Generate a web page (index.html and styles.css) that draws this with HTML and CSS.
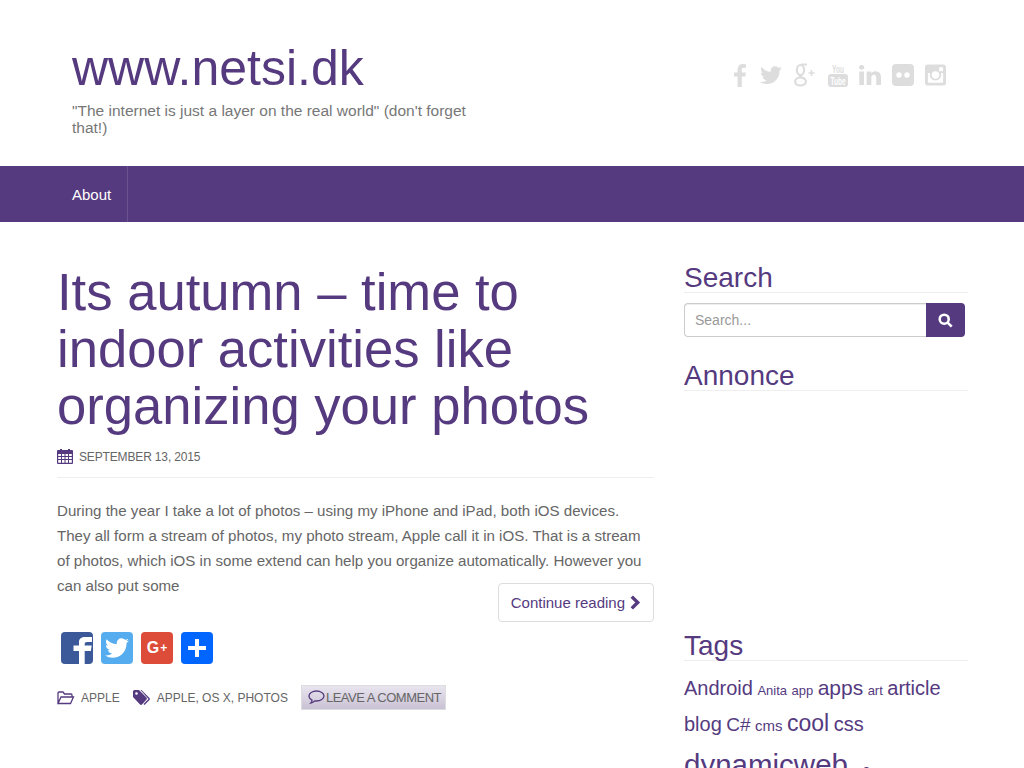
FILE: index.html

```html
<!DOCTYPE html>
<html lang="en">
<head>
  <meta charset="UTF-8">
  <title>www.netsi.dk</title>
  <link rel="stylesheet" href="styles.css">
</head>
<body>

  <header class="site-header">
    <div class="branding">
      <a class="site-title" href="#">www.netsi.dk</a>
      <p class="tagline">"The internet is just a layer on the real world" (don't forget that!)</p>
    </div>
    <div class="social">
      <svg class="soc soc-fb" viewBox="479 0 864 1664" preserveAspectRatio="none"><path d="M1343 12v264h-157q-86 0-116 36t-30 108v189h293l-39 296h-254v759h-306v-759h-255v-296h255v-218q0-186 104-288.5t277-102.5q147 0 228 12z"/></svg>
      <svg class="soc soc-tw" viewBox="100 236 1600 1300" preserveAspectRatio="none"><path d="M1684 408q-67 98-162 167 1 14 1 42 0 130-38 259.5t-115.5 248.5-184.5 210.5-258 146-323 54.5q-271 0-496-145 35 4 76 4 225 0 401-138-105-2-188-64.5t-114-159.5q33 5 61 5 43 0 85-11-112-23-185.5-111.5t-73.5-205.5v-4q68 38 146 41-66-44-105-115t-39-154q0-88 44-163 121 149 294.5 238.5t371.5 99.5q-8-38-8-74 0-134 94.5-228.5t228.5-94.5q140 0 236 102 109-21 205-78-37 115-142 178 99-10 198-54z"/></svg>
      <svg class="soc soc-gp" viewBox="0 0 22 24"><g fill="none" stroke="#ddd"><ellipse cx="6.500" cy="7" rx="3.600" ry="5" stroke-width="2.200"/><ellipse cx="6.500" cy="18.500" rx="5.400" ry="4" stroke-width="2.200"/><path d="M6.500 12c-2.500 2 3.500 2.500 4 4.500M7 1.500h6" stroke-width="2"/><path d="M17.500 7v6M14.500 10h6" stroke-width="1.600"/></g></svg>
      <svg class="soc soc-yt" viewBox="0 0 20 24"><text class="yt-you" x="10" y="9.500" text-anchor="middle" textLength="12" lengthAdjust="spacingAndGlyphs">You</text><rect x="0" y="11" width="20" height="13" rx="3"/><text class="yt-tube" x="10" y="21.500" text-anchor="middle" textLength="15" lengthAdjust="spacingAndGlyphs">Tube</text></svg>
      <svg class="soc soc-in" viewBox="128 148 1536 1468" preserveAspectRatio="none"><path d="M477 625v991h-330v-991h330zm21-306q1 73-50.500 122t-135.500 49h-2q-82 0-132-49t-50-122q0-74 51.500-122.500t134.500-48.500 133 48.500 51 122.500zm1166 729v568h-329v-530q0-105-40.500-164.500t-126.500-59.500q-63 0-105.500 34.500t-63.500 85.500q-11 30-11 81v553h-329q2-399 2-647t-1-296l-1-48h329v144h-2q20-32 41-56t56.500-52 87-43.500 114.500-15.500q171 0 275 113.500t104 332.500z"/></svg>
      <svg class="soc soc-fl" viewBox="0 0 22 22"><path fill-rule="evenodd" d="M4 0h14a4 4 0 0 1 4 4v14a4 4 0 0 1-4 4H4a4 4 0 0 1-4-4V4a4 4 0 0 1 4-4zM7 8.300a2.700 2.700 0 1 0 0 5.400 2.700 2.700 0 0 0 0-5.400zM15 8.300a2.700 2.700 0 1 0 0 5.400 2.700 2.700 0 0 0 0-5.400z"/></svg>
      <svg class="soc soc-ig" viewBox="0 0 22 22"><path fill-rule="evenodd" d="M3 0h16a3 3 0 0 1 3 3v16a3 3 0 0 1-3 3H3a3 3 0 0 1-3-3V3a3 3 0 0 1 3-3zM3 9v9a1 1 0 0 0 1 1h14a1 1 0 0 0 1-1V9h-2.300a6 6 0 1 1-11.400 0zM11 7a4 4 0 1 0 0 8 4 4 0 0 0 0-8zM15.500 3a.8.8 0 0 0-.8.8v2.400a.8.8 0 0 0 .8.8h2.700a.8.8 0 0 0 .8-.8V3.800a.8.8 0 0 0-.8-.8z"/></svg>
    </div>
  </header>

  <nav class="main-nav">
    <a class="nav-item" href="#">About</a>
  </nav>

  <div class="content">
    <main class="post">
      <h1 class="post-title">Its autumn – time to indoor activities like organizing your photos</h1>
      <div class="post-date">
        <svg class="ico-cal" viewBox="0 0 16 16"><path fill-rule="evenodd" d="M1 2h2V1h2v1h6V1h2v1h2a1 1 0 0 1 1 1v12a1 1 0 0 1-1 1H1a1 1 0 0 1-1-1V3a1 1 0 0 1 1-1zM1.200 6v2h2.800V6zM5 6v2h2.500V6zM8.500 6v2H11V6zM12 6v2h2.800V6zM1.200 9v2h2.800V9zM5 9v2h2.500V9zM8.500 9v2H11V9zM12 9v2h2.800V9zM1.200 12v2.800h2.800V12zM5 12v2.800h2.500V12zM8.500 12v2.800H11V12zM12 12v2.800h2.800V12z"/></svg>
        <span>September 13, 2015</span>
      </div>
      <p class="excerpt">During the year I take a lot of photos – using my iPhone and iPad, both iOS devices. They all form a stream of photos, my photo stream, Apple call it in iOS. That is a stream of photos, which iOS in some extend can help you organize automatically. However you can also put some</p>
      <div class="more-row">
        <a class="more-btn" href="#">Continue reading
          <svg class="ico-chev" viewBox="0 0 10 14"><path d="M2 1.500 7.500 7 2 12.500" /></svg>
        </a>
      </div>
      <div class="share">
        <a class="share-btn share-fb" href="#"><svg viewBox="0 0 32 32"><path d="M18 32V19h-5.500v-5.500H18v-3.500C18 6.500 20.500 5 24 5h7v5h-5c-1.500 0-2.300.7-2.300 2.300v1.200h7l-.8 5.500h-6.200V32z"/></svg></a>
        <a class="share-btn share-tw" href="#"><svg viewBox="0 0 1792 1792"><path transform="translate(134 134) scale(.85)" d="M1684 408q-67 98-162 167 1 14 1 42 0 130-38 259.500t-115.500 248.500-184.500 210.500-258 146-323 54.500q-271 0-496-145 35 4 76 4 225 0 401-138-105-2-188-64.500t-114-159.500q33 5 61 5 43 0 85-11-112-23-185.500-111.500t-73.500-205.500v-4q68 38 146 41-66-44-105-115t-39-154q0-88 44-163 121 149 294.500 238.500t371.500 99.500q-8-38-8-74 0-134 94.500-228.500t228.500-94.500q140 0 236 102 109-21 205-78-37 115-142 178 99-10 198-54z"/></svg></a>
        <a class="share-btn share-gp" href="#">G<small>+</small></a>
        <a class="share-btn share-add" href="#"><svg viewBox="0 0 32 32"><path d="M14 7h4v7h7v4h-7v7h-4v-7H7v-4h7z"/></svg></a>
      </div>
      <div class="post-meta">
        <svg class="ico-folder" viewBox="0 0 18 14"><path d="M1 12.500V2a1 1 0 0 1 1-1h4l1.500 2H14a1 1 0 0 1 1 1v2M1 12.500 4 6h12.500L13.500 12.500z"/></svg>
        <a class="meta-link" href="#">Apple</a>
        <svg class="ico-tags" viewBox="0 0 18 16"><path d="M0 1.500A1.500 1.500 0 0 1 1.500 0H6l7.500 7.500a1.500 1.500 0 0 1 0 2L9 14.500a1.500 1.500 0 0 1-2 0L0 7zM3.500 2.200a1.300 1.300 0 1 0 0 2.600 1.300 1.300 0 0 0 0-2.600z" fill-rule="evenodd"/><path d="M8.500 0 16.500 8a1.500 1.500 0 0 1 0 2l-5 5-1-1 5-5-8-9z"/></svg>
        <span class="meta-tags"><a class="meta-link" href="#">Apple</a>, <a class="meta-link" href="#">OS X</a>, <a class="meta-link" href="#">Photos</a></span>
        <a class="comment-btn" href="#">
          <svg class="ico-comment" viewBox="0 0 17 15"><path d="M8.500 1C4.400 1 1 3.200 1 6c0 1.700 1.200 3.100 3 4 0 1.200-.6 2.400-1.300 3.200 1.500-.3 3-1 4-2.300.6.100 1.200.100 1.800.100 4.100 0 7.500-2.200 7.500-5S12.600 1 8.500 1z"/></svg>Leave a comment
        </a>
      </div>
    </main>

    <aside class="sidebar">
      <section class="widget">
        <h2 class="widget-title">Search</h2>
        <form class="search-form">
          <input class="search-input" type="text" placeholder="Search...">
          <button class="search-btn" type="button">
            <svg viewBox="0 0 14 14"><circle cx="5.800" cy="5.800" r="4.200"/><path d="M9 9l3.800 3.800"/></svg>
          </button>
        </form>
      </section>
      <section class="widget">
        <h2 class="widget-title">Annonce</h2>
        <div class="ad-slot"></div>
      </section>
      <section class="widget">
        <h2 class="widget-title">Tags</h2>
        <div class="tagcloud">
          <a class="t20" href="#">Android</a>
          <a class="t13" href="#">Anita</a>
          <a class="t13" href="#">app</a>
          <a class="t21" href="#">apps</a>
          <a class="t13" href="#">art</a>
          <a class="t20" href="#">article</a>
          <a class="t20" href="#">blog</a>
          <a class="t19" href="#">C#</a>
          <a class="t15" href="#">cms</a>
          <a class="t23" href="#">cool</a>
          <a class="t20" href="#">css</a>
          <a class="t30" href="#">dynamicweb</a>
          <a class="t14 tag-next" href="#">e</a>
        </div>
      </section>
    </aside>
  </div>

</body>
</html>
```

FILE: styles.css

```css
html, body {
  height: 100%;
  overflow: hidden;
}
body {
  margin: 0;
  background: #fff;
  font-family: "Liberation Sans", Arial, sans-serif;
  color: #666;
}
a {
  color: #553a7f;
  text-decoration: none;
}

.site-header {
  display: flex;
  justify-content: space-between;
  height: 166px;
  padding: 40px 78px 0 72px;
  box-sizing: border-box;
}
.branding {
  width: 405px;
}
.site-title {
  display: block;
  font-size: 50px;
  line-height: 56px;
}
.tagline {
  margin: 6px 0 0;
  font-size: 15.5px;
  line-height: 17px;
  color: #777;
}
.social {
  display: flex;
  align-items: center;
  gap: 11px;
  height: 70px;
}
.soc {
  fill: #ddd;
  overflow: visible;
}
.soc-fb { width: 12px; height: 23px; }
.soc-tw { width: 22px; height: 18px; margin-left: 3px; }
.soc-gp { width: 22px; height: 24px; margin-left: 1px; }
.soc-yt { width: 20px; height: 24px; margin-left: 1px; }
.soc-in { width: 22px; height: 20px; }
.soc-fl { width: 22px; height: 22px; }
.soc-ig { width: 21px; height: 22px; }
.yt-you, .yt-tube {
  font-size: 11px;
  font-weight: bold;
}
.yt-tube {
  fill: #fff;
}

.main-nav {
  display: flex;
  height: 56px;
  padding-left: 56px;
  background: #553a7f;
}
.nav-item {
  padding: 0 16px;
  line-height: 58px;
  font-size: 15px;
  color: #fff;
  border-right: 1px solid #6b5392;
}

.content {
  display: grid;
  grid-template-columns: 597px 284px;
  column-gap: 30px;
  padding: 40px 0 0 57px;
}

.post-title {
  margin: 1px 0 0;
  font-size: 52.6px;
  font-weight: normal;
  line-height: 57px;
  color: #553a7f;
}
.post-date {
  display: flex;
  align-items: center;
  gap: 6px;
  margin-top: 14px;
  padding-bottom: 11px;
  border-bottom: 1px solid #eee;
  font-size: 12px;
  line-height: 18px;
  letter-spacing: -0.15px;
  text-transform: uppercase;
}
.ico-cal {
  width: 16px;
  height: 16px;
  margin-top: -2px;
  fill: #553a7f;
}
.excerpt {
  margin: 20px 0 0;
  padding-right: 7px;
  font-size: 15.1px;
  line-height: 25px;
}
.more-row {
  display: flex;
  justify-content: flex-end;
  margin-top: -15px;
}
.more-btn {
  display: flex;
  align-items: center;
  gap: 4px;
  height: 37px;
  padding: 0 12px;
  border: 1px solid #ddd;
  border-radius: 4px;
  font-size: 15px;
}
.ico-chev {
  width: 12px;
  height: 15px;
  fill: none;
  stroke: #553a7f;
  stroke-width: 3.200;
}
.share {
  display: flex;
  gap: 8px;
  margin: 10px 0 0 4px;
}
.share-btn {
  display: flex;
  align-items: center;
  justify-content: center;
  width: 32px;
  height: 32px;
  border-radius: 4px;
  color: #fff;
  fill: #fff;
  overflow: hidden;
}
.share-btn svg {
  width: 32px;
  height: 32px;
}
.share-fb { background: #3b5998; }
.share-tw { background: #55acee; }
.share-gp {
  background: #dd4b39;
  font-size: 16px;
  font-weight: bold;
}
.share-gp small {
  font-size: 12px;
  margin-left: 1px;
}
.share-add { background: #0166ff; }

.post-meta {
  display: flex;
  align-items: center;
  margin-top: 21px;
  font-size: 12px;
  text-transform: uppercase;
}
.meta-link {
  color: #666;
}
.meta-tags {
  margin-right: 13px;
}
.ico-folder {
  width: 18px;
  height: 14px;
  margin-right: 6px;
  fill: none;
  stroke: #553a7f;
  stroke-width: 1.300;
}
.ico-tags {
  width: 18px;
  height: 16px;
  margin: 0 6px 0 13px;
  fill: #553a7f;
}
.comment-btn {
  display: flex;
  align-items: center;
  height: 25px;
  box-sizing: border-box;
  padding: 0 4px 0 6px;
  border: 1px solid #ddd;
  background: linear-gradient(#e9e5ef, #c9c1d4);
  color: #666;
  font-size: 13px;
  letter-spacing: -0.5px;
}
.ico-comment {
  width: 17px;
  height: 15px;
  margin-right: 1px;
  fill: none;
  stroke: #553a7f;
  stroke-width: 1.300;
}

.sidebar {
  padding-top: 1px;
}
.widget-title {
  margin: 0;
  border-bottom: 1px solid #eee;
  font-size: 28px;
  font-weight: normal;
  line-height: 29px;
  color: #553a7f;
}
.search-form {
  display: flex;
  width: 281px;
  margin: 10px 0 24px;
}
.search-input {
  flex: 1;
  min-width: 0;
  height: 34px;
  box-sizing: border-box;
  padding: 0 10px;
  border: 1px solid #ccc;
  border-right: none;
  border-radius: 4px 0 0 4px;
  font-family: inherit;
  font-size: 14px;
  box-shadow: inset 0 1px 1px rgba(0,0,0,0.075);
}
.search-input::placeholder {
  color: #999;
}
.search-btn {
  display: flex;
  align-items: center;
  justify-content: center;
  width: 39px;
  height: 34px;
  padding: 0;
  border: none;
  border-radius: 0 4px 4px 0;
  background: #553a7f;
}
.search-btn svg {
  width: 15px;
  height: 15px;
  fill: none;
  stroke: #fff;
  stroke-width: 2.400;
}
.ad-slot {
  height: 240px;
}
.tagcloud {
  margin-top: 11px;
  line-height: 32px;
}
.t13 { font-size: 13px; }
.t14 { font-size: 14px; }
.t15 { font-size: 15px; }
.t19 { font-size: 19px; }
.t20 { font-size: 20px; }
.t21 { font-size: 21px; }
.t23 { font-size: 23px; }
.t30 {
  font-size: 29.5px;
  line-height: 46px;
}
.tag-next {
  margin-left: 10px;
}
```
